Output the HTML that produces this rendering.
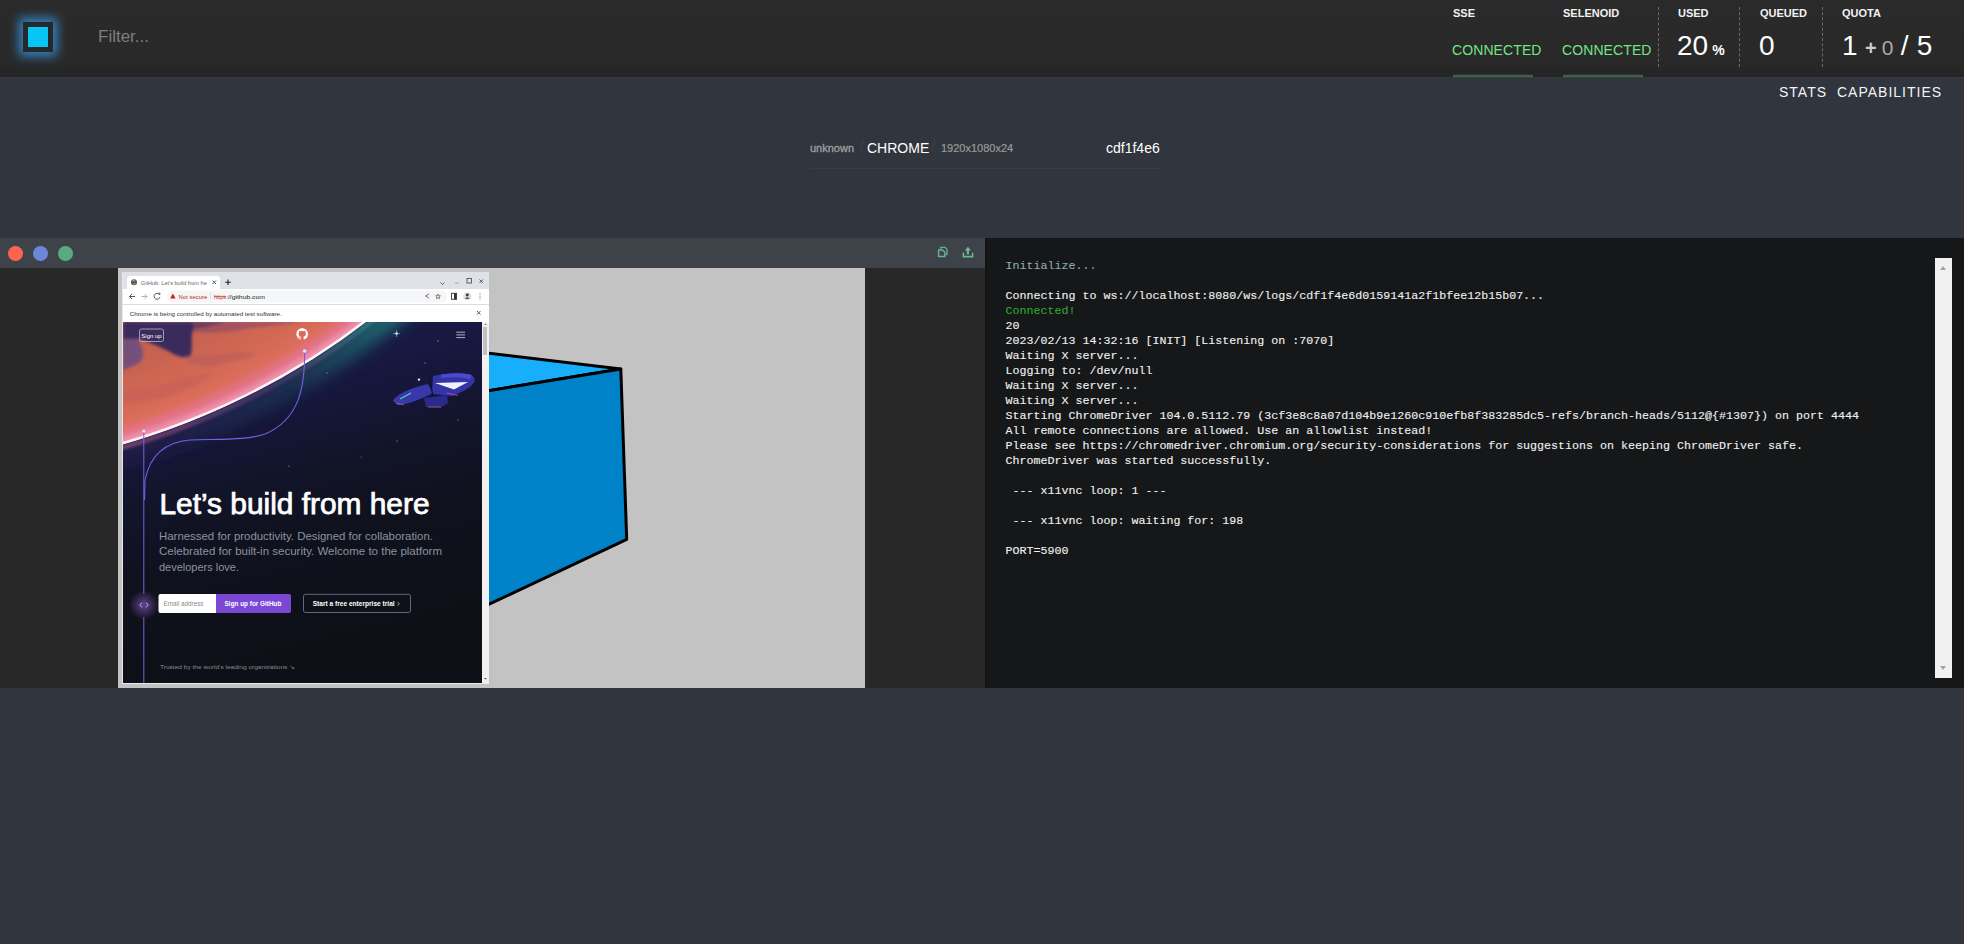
<!DOCTYPE html>
<html><head><meta charset="utf-8">
<style>
html,body{margin:0;padding:0;width:1964px;height:944px;overflow:hidden;background:#31353d;font-family:"Liberation Sans",sans-serif;}
.abs{position:absolute;}
#hdr{position:absolute;left:0;top:0;width:1964px;height:77px;background:linear-gradient(#2a2a2a 0px,#292929 60px,#242424 77px);box-shadow:0 1px 0 #363a41;}
#logo{position:absolute;left:23px;top:22px;width:20px;height:20px;border:5px solid #26292b;background:#08c6f3;box-shadow:0 0 10px 4px rgba(55,150,225,0.85);}
#filter{position:absolute;left:98px;top:27px;font-size:17px;color:#7e7e7e;}
.lbl{position:absolute;top:7px;font-size:11px;font-weight:bold;color:#f2f2f2;}
.conn{position:absolute;top:42px;font-size:14px;color:#74e585;letter-spacing:0.1px;}
.gbar{position:absolute;top:74px;height:3px;width:80px;background:linear-gradient(#1e3024,#3f5f47 60%,#4c6c54);}
.sep{position:absolute;top:7px;height:60px;width:0;border-left:1px dashed #6a6a6a;}
.big{position:absolute;top:30px;font-size:28px;color:#fff;}
.nav{position:absolute;top:84px;font-size:14px;color:#f4f4f4;letter-spacing:1px;}
#sess{position:absolute;left:810px;top:138px;width:350px;height:30px;}
#vid{position:absolute;left:0;top:238px;width:985px;height:450px;background:#282828;}
#tb{position:absolute;left:0;top:0;width:985px;height:30px;background:#3e434a;}
.dot{position:absolute;top:8px;width:15px;height:15px;border-radius:50%;}
#log{position:absolute;left:985px;top:238px;width:979px;height:450px;background:#161718;box-shadow:inset 2px 0 0 #101214;}
#logtxt{position:absolute;left:20.5px;top:21px;-webkit-text-stroke:0.12px currentColor;margin:0;font-family:"Liberation Mono",monospace;font-size:11.667px;line-height:15px;color:#f0f0f0;white-space:pre;}
#sb{position:absolute;left:950px;top:20px;width:17px;height:420px;background:#f1f1f1;}
</style></head>
<body>
<div id="hdr">
  <div id="logo"></div>
  <div id="filter">Filter...</div>
  <div class="lbl" style="left:1453px">SSE</div>
  <div class="conn" style="left:1452px">CONNECTED</div>
  <div class="gbar" style="left:1453px"></div>
  <div class="lbl" style="left:1563px">SELENOID</div>
  <div class="conn" style="left:1562px">CONNECTED</div>
  <div class="gbar" style="left:1563px"></div>
  <div class="sep" style="left:1658px"></div>
  <div class="sep" style="left:1739px"></div>
  <div class="sep" style="left:1822px"></div>
  <div class="lbl" style="left:1678px">USED</div>
  <div class="big" style="left:1677px">20<span style="font-size:14px;font-weight:bold;margin-left:4px">%</span></div>
  <div class="lbl" style="left:1760px">QUEUED</div>
  <div class="big" style="left:1759px">0</div>
  <div class="lbl" style="left:1842px">QUOTA</div>
  <div class="big" style="left:1842px">1<span style="font-size:20px;font-weight:bold;color:#ccc;margin-left:7.5px">+</span><span style="font-size:21px;color:#aaa;margin-left:5px">0</span><span style="margin-left:7.3px">/</span><span style="margin-left:8.2px">5</span></div>
</div>
<div class="nav" style="left:1779px">STATS</div>
<div class="nav" style="left:1837px">CAPABILITIES</div>

<div id="sess">
  <span class="abs" style="left:0;top:4px;font-size:11px;color:#a0a0a0;-webkit-text-stroke:0.3px #a0a0a0">unknown</span>
  <span class="abs" style="left:49px;top:-2px;font-size:18px;color:#3a3f47">/</span>
  <span class="abs" style="left:57px;top:2px;font-size:14px;color:#fff">CHROME</span>
  <span class="abs" style="left:121px;top:-2px;font-size:18px;color:#3a3f47">/</span>
  <span class="abs" style="left:131px;top:4px;font-size:11px;color:#9a9a9a;-webkit-text-stroke:0.2px #9a9a9a">1920x1080x24</span>
  <span class="abs" style="left:296px;top:2px;font-size:14px;color:#fff">cdf1f4e6</span>
  <div class="abs" style="left:0;top:30px;width:350px;height:1px;background:#383c44"></div>
</div>

<div id="vid">
  <div id="tb">
    <div class="dot" style="left:8px;background:#fd6351"></div>
    <div class="dot" style="left:33px;background:#6c86d8"></div>
    <div class="dot" style="left:58px;background:#56ab80"></div>
    <svg class="abs" style="left:930px;top:4px" width="50" height="22" viewBox="930 242 50 22">
      <path d="M940.8,249 L940.8,247.4 L945,247.4 L947,249.4 L947,254.6 L945.6,254.6" fill="none" stroke="#66b290" stroke-width="1.3"/>
      <path d="M938.6,250 L942.6,250 L944.8,252.2 L944.8,256.6 L938.6,256.6 Z" fill="none" stroke="#66b290" stroke-width="1.5"/>
      <path d="M963.4,252.8 L963.4,256.6 L972.6,256.6 L972.6,252.8" fill="none" stroke="#68b592" stroke-width="1.6"/>
      <path d="M967.9,246.8 L970.9,250.4 L969,250.4 L969,254.2 L966.8,254.2 L966.8,250.4 L964.9,250.4 Z" fill="#6ab996"/>
    </svg>
  </div>
  <svg class="abs" style="left:118px;top:30px" width="747" height="420" viewBox="118 268 747 420">
<defs>
  <clipPath id="cc"><rect x="123" y="322" width="359" height="361"/></clipPath>
  <linearGradient id="space" x1="0" y1="0" x2="0.25" y2="1">
    <stop offset="0" stop-color="#1f1c52"/>
    <stop offset="0.3" stop-color="#17173e"/>
    <stop offset="0.5" stop-color="#121429"/>
    <stop offset="0.7" stop-color="#0f111d"/>
    <stop offset="1" stop-color="#0d1016"/>
  </linearGradient>
  <radialGradient id="planet" gradientUnits="userSpaceOnUse" cx="-81" cy="-263" r="736">
    <stop offset="0.84" stop-color="#9e5862"/>
    <stop offset="0.88" stop-color="#c26050"/>
    <stop offset="0.95" stop-color="#d46954"/>
    <stop offset="0.972" stop-color="#dc6d5c"/>
    <stop offset="0.986" stop-color="#e4748a"/>
    <stop offset="0.996" stop-color="#f094b0"/>
    <stop offset="1" stop-color="#fff0f4"/>
  </radialGradient>
  <radialGradient id="glow" gradientUnits="userSpaceOnUse" cx="-81" cy="-263" r="800">
    <stop offset="0.92" stop-color="#2a8a8a" stop-opacity="0.9"/>
    <stop offset="0.96" stop-color="#1f4a6a" stop-opacity="0.5"/>
    <stop offset="1" stop-color="#161740" stop-opacity="0"/>
  </radialGradient>
  <filter id="bl1" x="-50%" y="-50%" width="200%" height="200%"><feGaussianBlur stdDeviation="0.7"/></filter>
  <filter id="bl2" x="-50%" y="-50%" width="200%" height="200%"><feGaussianBlur stdDeviation="1.8"/></filter>
  <filter id="bl3" x="-50%" y="-50%" width="200%" height="200%"><feGaussianBlur stdDeviation="3"/></filter>
  <filter id="bl8" x="-50%" y="-50%" width="200%" height="200%"><feGaussianBlur stdDeviation="8"/></filter>
  <linearGradient id="glowlin" gradientUnits="userSpaceOnUse" x1="400" y1="322" x2="150" y2="470">
    <stop offset="0" stop-color="#1f8a80" stop-opacity="0.8"/>
    <stop offset="0.45" stop-color="#1a4460" stop-opacity="0.55"/>
    <stop offset="1" stop-color="#30245e" stop-opacity="0.35"/>
  </linearGradient>
  <linearGradient id="rimglow" gradientUnits="userSpaceOnUse" x1="123" y1="450" x2="370" y2="322">
    <stop offset="0" stop-color="#c06090" stop-opacity="0.55"/>
    <stop offset="0.6" stop-color="#8a5090" stop-opacity="0.35"/>
    <stop offset="1" stop-color="#40a090" stop-opacity="0.5"/>
  </linearGradient>
  <radialGradient id="iconglow"><stop offset="0" stop-color="#6a4a9a" stop-opacity="0.9"/><stop offset="1" stop-color="#6a4a9a" stop-opacity="0"/></radialGradient>
</defs>
<rect x="118" y="268" width="747" height="420" fill="#c3c3c3"/>
<!-- cube -->
<polygon points="470,350.9 620.8,369 470,393.7" fill="#19aefc" stroke="#000" stroke-width="3" stroke-linejoin="round"/>
<polygon points="470,393.7 620.8,369 626.7,539.4 470,613.2" fill="#0082c8" stroke="#000" stroke-width="3" stroke-linejoin="round"/>
<!-- chrome window -->
<rect x="122" y="272" width="367" height="412" fill="#e9e9e9"/>
<rect x="123" y="272" width="366" height="17" fill="#dee1e6"/>
<path d="M127,289 L127,279 Q127,276 130,276 L217,276 Q220,276 220,279 L220,289 Z" fill="#ffffff"/>
<rect x="123" y="289" width="366" height="15" fill="#ffffff"/>
<rect x="167" y="290.5" width="280" height="12" rx="6" fill="#f5f6f7"/>
<rect x="123" y="304" width="366" height="1" fill="#dadce0"/>
<rect x="123" y="305" width="366" height="17" fill="#ffffff"/>
<!-- github content -->
<g clip-path="url(#cc)">
  <rect x="123" y="322" width="359" height="361" fill="url(#space)"/>
  <circle cx="-81" cy="-263" r="747" fill="none" stroke="url(#glowlin)" stroke-width="22" filter="url(#bl8)"/>
  <circle cx="-81" cy="-263" r="736" fill="url(#planet)"/>
  <g filter="url(#bl2)">
    <path d="M123,322 L226,322 C215,326 200,327 193,330 C190,338 194,350 190,357 C182,358 176,356 170,352 C158,346 145,340 137,339 L123,339 Z" fill="#3b2c5c"/>
    <path d="M193,322 L300,322 C285,326 260,326 240,330 C225,333 205,333 193,332 Z" fill="#8a4a66" opacity="0.6"/>
    <path d="M123,339 L137,339 C142,345 146,355 140,362 C134,366 128,368 123,370 Z" fill="#74507a"/>
    <path d="M186,356 C196,352 210,356 220,354 C232,352 246,350 256,354 C246,360 232,360 222,364 C210,368 196,366 186,362 Z" fill="#b65a5c" opacity="0.5"/>
    <path d="M123,392 C140,386 160,388 176,380 C190,374 206,376 214,372 C206,382 190,388 176,394 C160,400 140,402 123,404 Z" fill="#c25e55" opacity="0.5"/>
  </g>
  <circle cx="-81" cy="-263" r="739" fill="none" stroke="url(#rimglow)" stroke-width="5" filter="url(#bl2)"/>
  <circle cx="-81" cy="-263" r="735" fill="none" stroke="#fff4f4" stroke-width="2.4" filter="url(#bl1)"/>
  <!-- stars -->
  <g fill="#cfd8ff">
    <circle cx="396.6" cy="333.6" r="1.3"/>
    <circle cx="438" cy="341" r="0.6"/><circle cx="425" cy="363" r="0.5"/><circle cx="289" cy="466" r="0.5"/>
    <circle cx="327" cy="373" r="0.5"/><circle cx="214" cy="411" r="0.5"/><circle cx="397" cy="441" r="0.5"/>
    <circle cx="458" cy="420" r="0.5"/><circle cx="268" cy="502" r="0.4"/><circle cx="361" cy="457" r="0.4"/>
  </g>
  <path d="M393,333.6 h7 M396.6,330 v7" stroke="#bfe8ff" stroke-width="0.6" opacity="0.8"/>
  <!-- spaceship -->
  <g>
    <path d="M393,401 C395,395 410,388 428,384 L433,393 C420,400 405,405 398,405 Z" fill="#3937ac"/>
    <path d="M433,376 C445,373 465,372 474,377 C477,383 470,389 452,396 L432,394 Z" fill="#3434a6"/>
    <path d="M441,374.5 C452,373 465,372.5 472,375 L470,379 C460,377 450,377 441,378 Z" fill="#4a4ad0"/>
    <path d="M435,383 L468,382 L454,389.5 Z" fill="#f2f2ff"/>
    <path d="M424,398 L447,395 L448,403 L441,407.5 L426,407 Z" fill="#2a2a8c"/>
    <path d="M429,378 L433,396" stroke="#101030" stroke-width="1.2"/>
    <path d="M400,399 L411,393" stroke="#40e0a8" stroke-width="1.1"/>
    <path d="M396,403.5 L404,404.5 M447,393 L458,395.5 M428,407 L441,407" stroke="#e07878" stroke-width="0.6"/>
    <circle cx="419" cy="379.6" r="1.2" fill="#e8e8ff"/>
  </g>
  <!-- purple lines -->
  <path d="M304.6,351 C305,390 298,420 265,434 C248,440 225,439 190,440 C165,442 150,455 145,480 L144.5,500" fill="none" stroke="#7560e6" stroke-width="1.1"/>
  <path d="M143.8,431 L143.8,594 M143.8,617 L143.8,683" fill="none" stroke="#7560e0" stroke-width="1"/>
  <circle cx="304.6" cy="351" r="1.8" fill="#e6e0ff"/>
  <circle cx="143.8" cy="431" r="1.6" fill="#e6e0ff"/>
  <circle cx="143.9" cy="605" r="15" fill="url(#iconglow)"/>
  <path d="M142,602.5 L139.8,605 L142,607.5 M146,602.5 L148.2,605 L146,607.5" fill="none" stroke="#c8b8f0" stroke-width="0.9"/>
  <!-- nav -->
  <rect x="139.5" y="329" width="24" height="12.5" rx="2" fill="none" stroke="#c8c8d8" stroke-width="0.7"/>
  <text x="151.5" y="337.6" font-size="6" fill="#fff" text-anchor="middle" font-family="Liberation Sans">Sign up</text>
  <path transform="translate(296.4,328.3) scale(0.725)" fill="#fff" d="M8 0C3.58 0 0 3.58 0 8c0 3.54 2.29 6.53 5.47 7.59.4.07.55-.17.55-.38 0-.19-.01-.82-.01-1.49-2.01.37-2.530-.49-2.690-.94-.09-.23-.48-.94-.82-1.13-.28-.15-.68-.52-.01-.53.63-.01 1.08.58 1.23.82.72 1.21 1.87.87 2.33.66.07-.52.28-.87.51-1.07-1.78-.2-3.64-.89-3.64-3.95 0-.87.31-1.59.82-2.15-.08-.2-.36-1.02.08-2.12 0 0 .67-.21 2.2.82.64-.18 1.32-.27 2-.27.68 0 1.36.09 2 .27 1.53-1.04 2.2-.82 2.2-.82.44 1.1.16 1.92.08 2.120.51.56.82 1.27.82 2.15 0 3.07-1.87 3.75-3.65 3.95.29.25.54.73.54 1.48 0 1.07-.01 1.93-.01 2.2 0 .21.15.46.55.38A8.013 8.013 0 0016 8c0-4.42-3.58-8-8-8z"/>
  <path d="M456.3,332.2 h8.8 M456.3,334.9 h8.8 M456.3,337.6 h8.8" stroke="#f4f4f4" stroke-width="0.7"/>
  <!-- hero text -->
  <text x="159.5" y="513.8" font-size="28.8" fill="#fff" stroke="#fff" stroke-width="0.75" font-family="Liberation Sans" textLength="270" lengthAdjust="spacingAndGlyphs">Let’s build from here</text>
  <g font-family="Liberation Sans" font-size="11" fill="#8b939e">
    <text x="159" y="539.7" textLength="274" lengthAdjust="spacingAndGlyphs">Harnessed for productivity. Designed for collaboration.</text>
    <text x="159" y="555.3" textLength="283" lengthAdjust="spacingAndGlyphs">Celebrated for built-in security. Welcome to the platform</text>
    <text x="159" y="570.9" textLength="80" lengthAdjust="spacingAndGlyphs">developers love.</text>
  </g>
  <path d="M160.5,594 L216,594 L216,613 L160.5,613 Q158.5,613 158.5,611 L158.5,596 Q158.5,594 160.5,594 Z" fill="#ffffff"/>
  <text x="163.6" y="605.8" font-size="6.3" fill="#8a8a8a" font-family="Liberation Sans">Email address</text>
  <path d="M216,594 L289,594 Q291,594 291,596 L291,611 Q291,613 289,613 L216,613 Z" fill="#7b48d6"/>
  <text x="253" y="605.8" font-size="6.4" fill="#fff" font-family="Liberation Sans" font-weight="bold" text-anchor="middle">Sign up for GitHub</text>
  <rect x="303.5" y="594.3" width="107" height="18.2" rx="2" fill="#0e1118" stroke="#7e7aa6" stroke-width="0.8"/>
  <text x="312.7" y="605.8" font-size="6.4" fill="#fff" font-family="Liberation Sans" font-weight="bold" textLength="82" lengthAdjust="spacingAndGlyphs">Start a free enterprise trial</text>
  <path d="M397.6,602 L399.4,603.8 L397.6,605.6" fill="none" stroke="#ddd" stroke-width="0.7"/>
  <text x="160" y="669" font-size="5.6" fill="#858c96" font-family="Liberation Sans" textLength="135" lengthAdjust="spacingAndGlyphs">Trusted by the world’s leading organizations ↘</text>
</g>
<rect x="482" y="322" width="7" height="361" fill="#f1f1f1"/>
<rect x="483" y="327" width="4" height="28" fill="#c1c1c1"/><path d="M484,678 h3 l-1.5,1.5 z" fill="#555"/><path d="M484,325 h3 l-1.5,-1.5 z" fill="#888"/>
<!-- chrome UI glyphs -->
<g font-family="Liberation Sans" fill="#3c4043">
  <circle cx="134" cy="282.3" r="3" fill="#555"/><path d="M132.3,281 q1.5,-1.5 3,0.2 M133,284 q1.5,0.5 2.5,-0.8" stroke="#eee" stroke-width="0.6" fill="none"/>
  <text x="140.8" y="284.5" font-size="6" fill="#666" textLength="66" lengthAdjust="spacingAndGlyphs">GitHub: Let’s build from he</text>
  <path d="M212.5,280.5 l3.5,3.5 m0,-3.5 l-3.5,3.5" stroke="#444" stroke-width="0.9"/>
  <path d="M228,279.5 v5.5 M225.2,282.3 h5.6" stroke="#222" stroke-width="1.1"/>
  <path d="M440.5,282.5 l2,2 l2,-2" fill="none" stroke="#555" stroke-width="0.9"/>
  <path d="M455,283 h4" stroke="#999" stroke-width="0.8"/>
  <rect x="467" y="278.5" width="4.5" height="4.5" fill="none" stroke="#555" stroke-width="0.9"/>
  <path d="M479.5,279.5 l3.5,3.5 m0,-3.5 l-3.5,3.5" stroke="#444" stroke-width="0.9"/>
  <!-- nav buttons -->
  <path d="M135,296.5 h-5.5 m2.5,-2.5 l-2.5,2.5 l2.5,2.5" fill="none" stroke="#444" stroke-width="0.9"/>
  <path d="M141.5,296.5 h5.5 m-2.5,-2.5 l2.5,2.5 l-2.5,2.5" fill="none" stroke="#aaa" stroke-width="0.9"/>
  <path d="M159.5,294.5 A3,3 0 1 0 160,297" fill="none" stroke="#444" stroke-width="0.9"/>
  <path d="M158,293.5 l2,1 l-0.3,-2" fill="none" stroke="#444" stroke-width="0.8"/>
  <path d="M170.2,298.5 l2.7,-5 l2.7,5 z" fill="#c5221f"/>
  <text x="178.6" y="298.8" font-size="6" fill="#c5221f" textLength="28.7" lengthAdjust="spacingAndGlyphs">Not secure</text>
  <rect x="210.5" y="292.5" width="0.6" height="7" fill="#ccc"/>
  <text x="214" y="298.8" font-size="6" fill="#c5221f" textLength="12" lengthAdjust="spacingAndGlyphs">https</text>
  <path d="M214,296.3 h12" stroke="#c5221f" stroke-width="0.6"/>
  <text x="226" y="298.8" font-size="6" fill="#202124" textLength="39" lengthAdjust="spacingAndGlyphs">://github.com</text>
  <path d="M429,294 l-3.5,2 l3.5,2" fill="none" stroke="#555" stroke-width="0.8"/>
  <path d="M436.5,298.8 l1.5,-1.2 l1.5,1.2 l-0.4,-1.8 l1.3,-1.2 l-1.8,-0.1 l-0.6,-1.7 l-0.6,1.7 l-1.8,0.1 l1.3,1.2 z" fill="none" stroke="#555" stroke-width="0.7"/>
  <rect x="451.5" y="293.3" width="5" height="6" fill="none" stroke="#333" stroke-width="0.9"/>
  <rect x="454" y="293.3" width="2.5" height="6" fill="#333"/>
  <circle cx="467.3" cy="296.3" r="4" fill="#e0e0e0"/>
  <circle cx="467.3" cy="295" r="1.4" fill="#333"/><path d="M464.8,298.8 q2.5,-3 5,0 z" fill="#333"/>
  <path d="M480,293.5 v6" stroke="#444" stroke-width="0.8" stroke-dasharray="1 1.3"/>
  <text x="129.8" y="315.5" font-size="6.2" fill="#333" textLength="152" lengthAdjust="spacingAndGlyphs">Chrome is being controlled by automated test software.</text>
  <path d="M477,311 l3.5,3.5 m0,-3.5 l-3.5,3.5" stroke="#444" stroke-width="0.9"/>
</g>
</svg>
</div>

<div id="log">
<pre id="logtxt"><span style="color:#8fa9b6">Initialize...</span>

Connecting to ws://localhost:8080/ws/logs/cdf1f4e6d0159141a2f1bfee12b15b07...
<span style="color:#2fa52f">Connected!</span>
20
2023/02/13 14:32:16 [INIT] [Listening on :7070]
Waiting X server...
Logging to: /dev/null
Waiting X server...
Waiting X server...
Starting ChromeDriver 104.0.5112.79 (3cf3e8c8a07d104b9e1260c910efb8f383285dc5-refs/branch-heads/5112@{#1307}) on port 4444
All remote connections are allowed. Use an allowlist instead!
Please see https://chromedriver.chromium.org/security-considerations for suggestions on keeping ChromeDriver safe.
ChromeDriver was started successfully.

 --- x11vnc loop: 1 ---

 --- x11vnc loop: waiting for: 198

PORT=5900</pre>
  <div id="sb"><div class="abs" style="left:5px;top:8px;width:0;height:0;border-left:3.5px solid transparent;border-right:3.5px solid transparent;border-bottom:4px solid #a3a3a3"></div><div class="abs" style="left:5px;top:408px;width:0;height:0;border-left:3.5px solid transparent;border-right:3.5px solid transparent;border-top:4px solid #a3a3a3"></div></div>
</div>
</body></html>
